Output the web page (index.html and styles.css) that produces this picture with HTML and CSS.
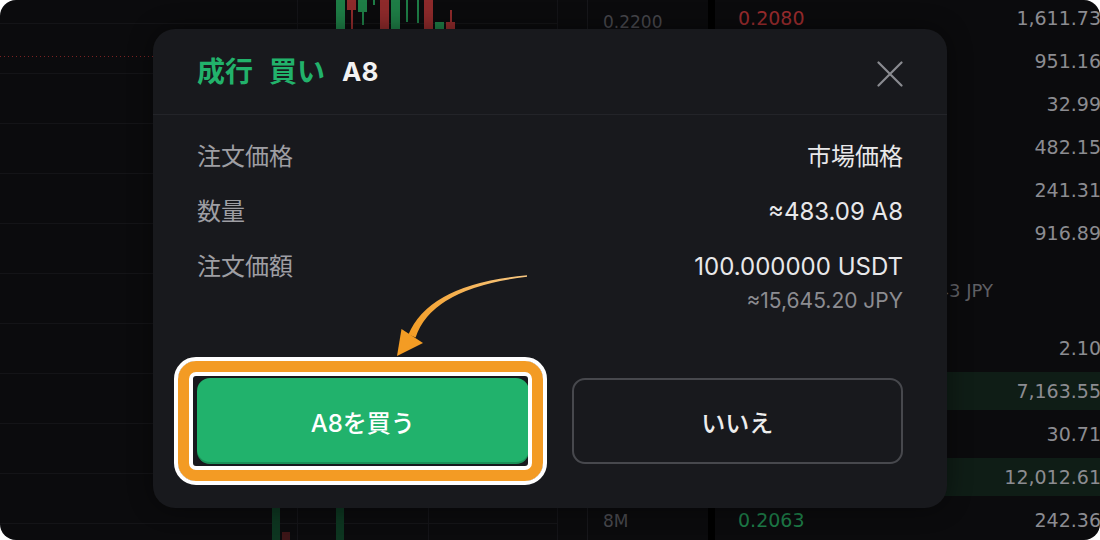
FILE: index.html
```html
<!DOCTYPE html>
<html lang="ja">
<head>
<meta charset="utf-8">
<title>成行 買い A8</title>
<link rel="stylesheet" href="styles.css">
</head>
<body>
<div class="screen">
  <div class="chart">
    <div class="candles">
      <div class="candle up"><i class="body" style="top:0;height:60px"></i></div>
      <div class="candle down"><i class="wick" style="top:0;height:40px"></i><i class="body" style="top:0;height:10px"></i></div>
      <div class="candle up"><i class="wick" style="top:0;height:25px"></i><i class="body" style="top:0;height:12px"></i></div>
      <div class="candle up"><i class="wick" style="top:0;height:5px"></i></div>
      <div class="candle down"><i class="body" style="top:0;height:60px"></i></div>
      <div class="candle up"><i class="body" style="top:0;height:60px"></i></div>
      <div class="candle up"><i class="wick" style="top:0;height:22px"></i></div>
      <div class="candle up"><i class="wick" style="top:0;height:23px"></i></div>
      <div class="candle down"><i class="body" style="top:0;height:60px"></i></div>
      <div class="candle up"><i class="body" style="top:22px;height:38px"></i></div>
      <div class="candle down"><i class="wick" style="top:10px;height:20px"></i><i class="body" style="top:22px;height:38px"></i></div>
    </div>
    <div class="volumes">
      <i class="vol up" style="height:40px"></i>
      <i class="vol down" style="height:8px"></i>
      <i class="vol up gap" style="height:40px"></i>
    </div>
  </div>
  <div class="sep"></div>
  <div class="axis">
    <span class="axis-label">0.2200</span>
    <span class="axis-label">8M</span>
  </div>
  <div class="strip"></div>
  <div class="book">
    <div class="row"><span class="px ask">0.2080</span><span class="amt">1,611.73</span></div>
    <div class="row"><span class="px ask"></span><span class="amt">951.16</span></div>
    <div class="row"><span class="px ask"></span><span class="amt">32.99</span></div>
    <div class="row"><span class="px ask"></span><span class="amt">482.15</span></div>
    <div class="row"><span class="px ask"></span><span class="amt">241.31</span></div>
    <div class="row"><span class="px ask"></span><span class="amt">916.89</span></div>
    <div class="mid"><span class="mid-fiat">≈32.43 JPY</span></div>
    <div class="row"><span class="px bid"></span><span class="amt">2.10</span></div>
    <div class="row depth"><span class="px bid"></span><span class="amt">7,163.55</span></div>
    <div class="row"><span class="px bid"></span><span class="amt">30.71</span></div>
    <div class="row depth"><span class="px bid"></span><span class="amt">12,012.61</span></div>
    <div class="row"><span class="px bid">0.2063</span><span class="amt">242.36</span></div>
  </div>

  <div class="modal">
    <div class="modal-head">
      <div class="title">
        <span class="t-green">成行</span>
        <span class="t-green">買い</span>
        <span class="t-white">A8</span>
      </div>
      <svg class="close" width="26" height="26" viewBox="0 0 26 26">
        <path d="M1.5 1.5 L24.5 24.5 M24.5 1.5 L1.5 24.5" stroke="#8a8b90" stroke-width="2.2" stroke-linecap="round" fill="none"/>
      </svg>
    </div>
    <div class="modal-body">
      <div class="rows">
        <div class="info"><span class="label">注文価格</span><span class="value">市場価格</span></div>
        <div class="info"><span class="label">数量</span><span class="value">≈483.09 A8</span></div>
        <div class="info">
          <span class="label">注文価額</span>
          <div class="value-stack">
            <span class="value">100.000000 USDT</span>
            <span class="sub">≈15,645.20 JPY</span>
          </div>
        </div>
      </div>
      <div class="buttons">
        <button class="btn buy">A8を買う</button>
        <button class="btn no">いいえ</button>
      </div>
    </div>
  </div>

  <div class="highlight"></div>
  <svg class="arrow" width="1100" height="540" viewBox="0 0 1100 540">
    <defs>
      <linearGradient id="ag" x1="527" y1="276" x2="410" y2="336" gradientUnits="userSpaceOnUse">
        <stop offset="0" stop-color="#f8c882"/>
        <stop offset="1" stop-color="#f39c24"/>
      </linearGradient>
    </defs>
    <path d="M527 275.3 Q429.4 283.8 408.4 334.6 L415.6 337.4 Q431.6 288.2 527 276.7 Z" fill="url(#ag)"/>
    <polygon points="397,356 401.5,329 423,343" fill="#f39c24"/>
  </svg>
</div>
</body>
</html>
```

FILE: styles.css
```css
html, body {
  margin: 0;
  padding: 0;
  background: #ffffff;
}

body {
  font-family: "Inter", "Noto Sans CJK JP", "Noto Sans", sans-serif;
}

.screen {
  position: relative;
  width: 1100px;
  height: 540px;
  background: #0b0b0d;
  border-radius: 16px;
  overflow: hidden;
  display: flex;
}

/* ---------- chart ---------- */
.chart {
  width: 557px;
  flex: none;
  display: flex;
  flex-direction: column;
  justify-content: space-between;
  background:
    repeating-linear-gradient(to right, #7a2222 0 1.5px, transparent 1.5px 4px) 0 56px / 100% 1px no-repeat,
    linear-gradient(#141418, #141418) 297px 0 / 1px 100% no-repeat,
    linear-gradient(#141418, #141418) 428px 0 / 1px 100% no-repeat,
    repeating-linear-gradient(to bottom, transparent 0 23px, #141417 23px 24px, transparent 24px 50px);
  border-right: 1px solid #141418;
}

.candles {
  display: flex;
  gap: 2px;
  padding-left: 336px;
  height: 60px;
}

.candle {
  position: relative;
  width: 9px;
  height: 60px;
}

.candle .body {
  position: absolute;
  left: 0;
  width: 9px;
}

.candle .wick {
  position: absolute;
  left: 4px;
  width: 1.5px;
}

.candle.up .body, .candle.up .wick { background: #1e7d46; }
.candle.down .body, .candle.down .wick { background: #8e2a2b; }

.volumes {
  display: flex;
  align-items: flex-end;
  gap: 2px;
  padding-left: 272px;
  height: 40px;
}

.vol {
  width: 8px;
}

.vol.up { background: #0d3520; }
.vol.down { background: #3c1517; }
.vol.gap { margin-left: 44px; }

.sep {
  width: 29px;
  flex: none;
  border-right: 1px solid #17171b;
}

.axis {
  width: 105px;
  flex: none;
  padding-left: 15px;
  display: flex;
  flex-direction: column;
  justify-content: space-between;
  color: #47474c;
  font-family: "DejaVu Sans", sans-serif;
  font-size: 17px;
  line-height: 24px;
  padding-top: 10px;
  padding-bottom: 7px;
}

.strip {
  width: 7px;
  flex: none;
  background: #000;
}

/* ---------- order book ---------- */
.book {
  flex: 1;
  display: flex;
  flex-direction: column;
  margin-top: -4px;
  font-family: "DejaVu Sans", sans-serif;
  font-size: 19px;
}

.row {
  height: 43px;
  flex: none;
  display: flex;
  align-items: center;
  justify-content: space-between;
  padding-left: 23px;
  margin-right: -1px;
}

.row.depth {
  background: linear-gradient(to bottom, transparent 3px, #0f1d16 3px, #0f1d16 41px, transparent 41px);
}

.px.ask { color: #9a2b2d; }
.px.bid { color: #1d7a47; }
.amt { color: #8c8c91; }

.mid {
  height: 72px;
  flex: none;
  display: flex;
  align-items: center;
  justify-content: flex-end;
  padding-right: 107px;
  color: #5f5f64;
  font-size: 18px;
}

/* ---------- modal ---------- */
.modal {
  position: absolute;
  left: 153px;
  top: 29px;
  width: 794px;
  height: 479px;
  background: #18191d;
  border-radius: 22px;
  box-shadow: 0 0 24px rgba(0, 0, 0, 0.45);
  display: flex;
  flex-direction: column;
}

.modal-head {
  height: 86px;
  flex: none;
  box-sizing: border-box;
  border-bottom: 1px solid #232429;
  display: flex;
  align-items: center;
  justify-content: space-between;
  padding: 0 44px;
}

.title {
  display: flex;
  align-items: center;
  gap: 16px;
  font-size: 28px;
  font-weight: 700;
  line-height: 36px;
  padding-top: 1px;
}

.t-green { color: #22b26b; }
.t-white { color: #f2f2f2; font-size: 26px; margin-left: 1px; }

.close {
  display: block;
  margin-top: 4px;
}

.modal-body {
  flex: 1;
  display: flex;
  flex-direction: column;
  padding: 25px 44px 44px;
}

.rows {
  display: flex;
  flex-direction: column;
  gap: 21px;
}

.info {
  display: flex;
  justify-content: space-between;
  align-items: flex-start;
}

.label {
  font-size: 24px;
  line-height: 34px;
  color: #9e9ea3;
}

.value-stack {
  display: flex;
  flex-direction: column;
  align-items: flex-end;
}

.value {
  font-size: 24px;
  line-height: 34px;
  color: #e8e8ea;
}

.sub {
  margin-top: 4px;
  font-size: 21px;
  line-height: 26px;
  color: #8c8c91;
}

.buttons {
  margin-top: auto;
  display: grid;
  grid-template-columns: 1fr 1fr;
  gap: 43px;
}

.btn {
  height: 86px;
  font-family: "Inter", "Noto Sans CJK JP", sans-serif;
  font-size: 24px;
  font-weight: 500;
  border-radius: 13px;
  cursor: pointer;
}

.btn.buy {
  background: #21b26c;
  color: #ffffff;
  border: none;
  box-shadow: inset 0 -2px 0 rgba(0, 0, 0, 0.18);
}

.btn.no {
  background: transparent;
  color: #ededed;
  border: 2px solid #47484d;
}

/* ---------- annotation ---------- */
.highlight {
  position: absolute;
  left: 174px;
  top: 357px;
  width: 373px;
  height: 128px;
  box-sizing: border-box;
  border: 4px solid #ffffff;
  border-radius: 22px;
  box-shadow: inset 0 0 0 11px #f39b24, inset 0 0 0 15px #ffffff;
  pointer-events: none;
}

.arrow {
  position: absolute;
  left: 0;
  top: 0;
  pointer-events: none;
}
```
